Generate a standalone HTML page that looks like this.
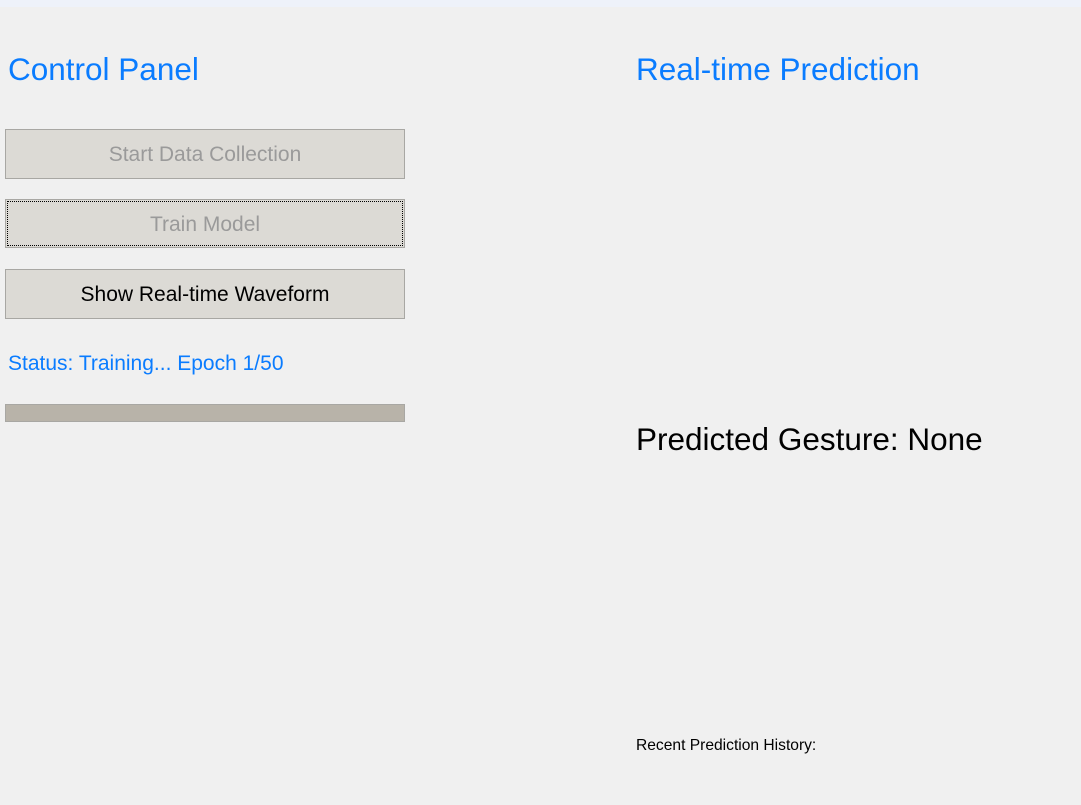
<!DOCTYPE html><html><head><style>
body{margin:0;width:1081px;height:805px;background:#f0f0f0;font-family:"Liberation Sans",sans-serif;position:relative;overflow:hidden}
.a{position:absolute;white-space:nowrap}
.top{left:0;top:0;width:1081px;height:7px;background:#eef2fa}
.h{color:#0a7cff;font-size:31.5px}
.b{position:absolute;left:5px;width:398px;background:#dcdad5;border:1px solid #a8a7a3;font-size:21px;text-align:center;color:#9a9a9a}
</style></head><body>
<div class="a top"></div>
<div class="a h" style="left:8px;top:51px">Control Panel</div>
<div class="a h" style="left:636px;top:51px">Real-time Prediction</div>
<div class="b" style="top:129px;height:48px;line-height:50px">Start Data Collection</div>
<div class="b" style="top:199px;height:47px;line-height:49px"><div style="position:absolute;left:1px;top:1px;right:1px;bottom:1px;border:1px dotted #000"></div>Train Model</div>
<div class="b" style="top:269px;height:48px;line-height:50px;color:#000">Show Real-time Waveform</div>
<div class="a" style="left:8px;top:352px;font-size:21px;color:#0a7cff">Status: Training... Epoch 1/50</div>
<div class="a" style="left:5px;top:404px;width:398px;height:16px;background:#b8b3a9;border:1px solid #a8a7a3"></div>
<div class="a" style="left:636px;top:421px;font-size:31.5px;color:#000">Predicted Gesture: None</div>
<div class="a" style="left:636px;top:737px;font-size:15.6px;color:#000">Recent Prediction History:</div>
</body></html>
